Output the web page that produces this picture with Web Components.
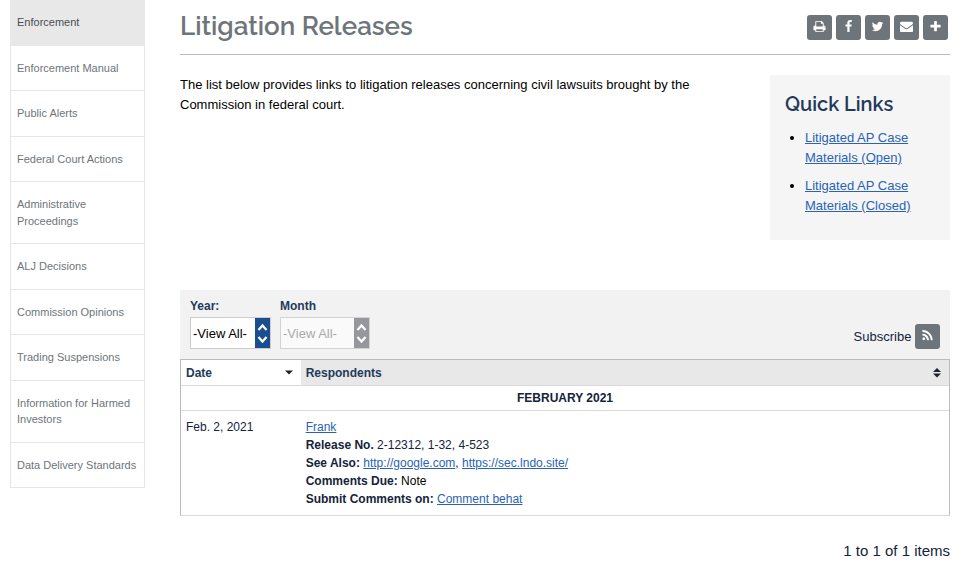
<!DOCTYPE html>
<html lang="en"><head><meta charset="utf-8"><title>Litigation Releases</title>
<style>html,body{margin:0;background:#fff}body{font-family:"Liberation Sans",Arial,sans-serif;color:#000}</style></head>
<body><release-page></release-page>
<script>
const define = (name, html, setup) => customElements.define(name, class extends HTMLElement {
  constructor() {
    super();
    const t = document.createElement('template');
    t.innerHTML = html;
    this.attachShadow({mode: 'open'}).append(t.content.cloneNode(true));
  }
  connectedCallback() { if (setup) setup(this, this.shadowRoot); }
});

const ICONS = {
  print: 'M448 1536h896v-256h-896v256zm0-640h896v-384h-160q-40 0-68-28t-28-68v-160h-640v640zm1152 64q0-26-19-45t-45-19-45 19-19 45 19 45 45 19 45-19 19-45zm128 0v416q0 13-9.5 22.5t-22.5 9.5h-224v160q0 40-28 68t-68 28h-960q-40 0-68-28t-28-68v-160h-224q-13 0-22.5-9.5t-9.500-22.500v-416q0-79 56.500-135.500t135.500-56.500h64v-544q0-40 28-68t68-28h672q40 0 88 20t76 48l152 152q28 28 48 76t20 88v256h64q79 0 135.500 56.500t56.500 135.500z',
  facebook: 'M1343 12v264h-157q-86 0-116 36t-30 108v189h293l-39 296h-254v759h-306v-759h-255v-296h255v-218q0-186 104-288.500t277-102.500q147 0 228 12z',
  twitter: 'M1684 408q-67 98-162 167 1 14 1 42 0 130-38 259.500t-115.500 248.500-184.500 210.500-258 146-323 54.500q-271 0-496-145 35 4 78 4 225 0 401-138-105-2-188-64.500t-114-159.500q33 5 61 5 43 0 85-11-112-23-185.500-111.500t-73.500-205.500v-4q68 38 146 41-66-44-105-115t-39-154q0-88 44-163 121 149 294.500 238.500t371.500 99.500q-8-38-8-74 0-134 94.500-228.500t228.500-94.500q140 0 236 102 109-21 205-78-37 115-142 178 93-10 186-50z',
  envelope: 'M1792 710v794q0 66-47 113t-113 47h-1472q-66 0-113-47t-47-113v-794q44 49 101 87 362 246 497 345 57 42 92.500 65.500t94.500 48 110 24.500h2q51 0 110-24.500t94.500-48 92.500-65.500q170-123 498-345 57-39 100-87zm0-294q0 79-49 151t-122 123q-376 261-468 325-10 7-42.500 31t-54 38.500-52 32.500-57.500 27-50 9h-2q-23 0-50-9t-57.500-27-52-32.500-54-38.500-42.500-31q-91-64-262-182.500t-205-142.500q-62-42-117-115.500t-55-136.500q0-78 41.500-130t118.500-52h1472q65 0 112.500 47t47.500 113z',
  plus: 'M1600 736v192q0 40-28 68t-68 28h-416v416q0 40-28 68t-68 28h-192q-40 0-68-28t-28-68v-416h-416q-40 0-68-28t-28-68v-192q0-40 28-68t68-28h416v-416q0-40 28-68t68-28h192q40 0 68 28t28 68v416h416q40 0 68 28t28 68z',
  rss: 'M576 1344q0 80-56 136t-136 56-136-56-56-136 56-136 136-56 136 56 56 136zm512 123q2 28-17 48-18 21-47 21h-135q-25 0-43-16.500t-20-41.500q-22-229-184.500-391.500t-391.500-184.500q-25-2-41.500-20t-16.500-43v-135q0-29 21-47 17-17 43-17h5q160 13 306 80.500t259 181.500q114 113 181.500 259t80.500 306zm512 2q2 27-18 47-18 20-46 20h-143q-26 0-44.500-17.500t-19.500-42.500q-12-215-101-408.500t-231.500-336-336-231.500-408.500-102q-25-1-42.500-19.500t-17.500-43.500v-143q0-28 20-46 18-18 44-18h3q262 13 501.500 120t425.500 294q187 186 294 425.500t120 501.500z'
};

define('icon-button', `<style>
:host{display:flex;width:25px;height:25px;border-radius:3px;background:#6e757a;justify-content:center;align-items:center;box-sizing:border-box;padding-bottom:2px}
svg{width:13px;height:13px;fill:#fff;display:block}</style>
<svg viewBox="0 0 1792 1792"><path/></svg>`,
(el, root) => root.querySelector('path').setAttribute('d', ICONS[el.getAttribute('icon')]));

define('nav-item', `<style>
:host{display:block;padding:14px 5px 14px 6px;border:1px solid #e6e6e6;border-top:0;font-size:11px;line-height:16.5px;color:#6e757a}
:host([current]){background:#e8e8e8;color:#494d50;border-color:#e8e8e8}</style><slot></slot>`);

define('side-nav', `<style>:host{display:block;width:135px;box-sizing:border-box}</style><slot></slot>`);

define('text-link', `<style>:host{display:inline;color:#2a62b4;text-decoration:underline}</style><slot></slot>`);

define('page-header', `<style>
:host{display:flex;justify-content:space-between;height:54px;border-bottom:1px solid #bbb}
h1{margin:7px 0 0;font:600 26px/38px Raleway,Lato,sans-serif;color:#6e757a;white-space:nowrap}
div{display:flex;gap:4px;padding:15px 2px 0 0}</style>
<h1><slot></slot></h1><div><slot name="tools"></slot></div>`);

define('quick-links', `<style>
:host{display:block;width:180px;height:165px;box-sizing:border-box;background:#f5f5f5;padding:15px}
h2{margin:0;font:600 20px/28px Raleway,Lato,sans-serif;color:#223a5a;white-space:nowrap}
ul{margin:10px 0 0;padding:0 0 0 20px;font-size:13px;line-height:20px}li{margin-bottom:8px}</style>
<h2><slot></slot></h2><ul><li><text-link>Litigated AP Case Materials (Open)</text-link></li><li><text-link>Litigated AP Case Materials (Closed)</text-link></li></ul>`);

define('filter-select', `<style>
:host{display:block;color:#223a5a;font-size:12px;--accent:#1a4e8e}
b{display:block;line-height:18px;height:20px}
.box{display:flex;height:30px;border:1px solid #ccc;background:#fff}
span{flex:1;padding-left:2px;font-size:13px;line-height:31px;color:#000;white-space:nowrap}
svg{display:block;width:15px;height:30px;background:var(--accent)}
:host([disabled]){--accent:#94989c}
:host([disabled]) .box{background:#fafafa;border-color:#d3d3d3}
:host([disabled]) span{color:#aaa}</style>
<b><slot name="label"></slot></b><div class="box"><span><slot></slot></span><svg viewBox="0 0 15 30" fill="none" stroke="#fff" stroke-width="2.2"><path d="M3.500 12L7.500 7.500L11.500 12M3.500 19L7.500 23.500L11.500 19"/></svg></div>`);

define('filter-bar', `<style>
:host{display:flex;height:69px;box-sizing:border-box;background:#f2f2f2;padding:7px 10px 0}
filter-select:first-of-type{width:81px;margin-right:9px}filter-select:nth-of-type(2){width:90px}
.sub{margin:27px 0 0 auto;display:flex;gap:3.600px;font-size:13px;line-height:25px;height:25px;color:#14233c}</style>
<filter-select><span slot="label">Year:</span>-View All-</filter-select>
<filter-select disabled><span slot="label">Month</span>-View All-</filter-select>
<div class="sub"><span>Subscribe</span><icon-button icon="rss"></icon-button></div>`);

define('release-table', `<style>
:host{display:block;border:1px solid #bbb;border-bottom-color:#d9d9d9;font-size:12px;color:#14233c}
.row{display:grid;grid-template-columns:120px 1fr}
.head{height:25px;line-height:26px;font-weight:bold;color:#223a5a;border-bottom:1px solid #d9d9d9}
.head>div{display:flex;justify-content:space-between;align-items:center;height:25px;box-sizing:border-box;padding:0 8px 0 5px}
.head>div+div{background:#e8e8e8;padding-left:4.700px}
svg{display:block;fill:#1e252c}
.month{height:24px;line-height:24px;text-align:center;font-weight:bold;border-bottom:1px solid #d9d9d9}
.body{line-height:18px;padding:7px 0 7px;}
.body>div{padding-left:5px}.body>div+div{padding-left:4.700px}.note{color:#000}</style>
<div class="row head"><div>Date<svg width="8" height="5"><path d="M0 .5h8L4 4.500z"/></svg></div>
<div>Respondents<svg width="8" height="10"><path d="M0 4h8L4 0zM0 5.500h8L4 9.500z"/></svg></div></div>
<div class="month">FEBRUARY 2021</div>
<div class="row body"><div>Feb. 2, 2021</div><div>
<text-link>Frank</text-link><br><b>Release No.</b> 2-12312, 1-32, 4-523<br>
<b>See Also:</b> <text-link>http://google.com</text-link>, <text-link>https://sec.lndo.site/</text-link><br>
<b>Comments Due:</b> <span class="note">Note</span><br><b>Submit Comments on:</b> <text-link>Comment behat</text-link></div></div>`);

define('release-page', `<style>
:host{display:grid;grid-template-columns:135px 770px;column-gap:35px;width:960px;height:586px;box-sizing:border-box;padding-left:10px;overflow:hidden}
.intro{display:flex;justify-content:space-between;padding-top:20px;height:215px}
p{margin:0;width:540px;font-size:13px;line-height:20px}
.count{text-align:right;font-size:15px;line-height:20px;color:#14233c;margin-top:25px}</style>
<side-nav><nav-item current>Enforcement</nav-item><nav-item>Enforcement Manual</nav-item><nav-item>Public Alerts</nav-item><nav-item>Federal Court Actions</nav-item><nav-item>Administrative Proceedings</nav-item><nav-item>ALJ Decisions</nav-item><nav-item>Commission Opinions</nav-item><nav-item>Trading Suspensions</nav-item><nav-item>Information for Harmed Investors</nav-item><nav-item>Data Delivery Standards</nav-item></side-nav>
<main><page-header>Litigation Releases<icon-button slot="tools" icon="print"></icon-button><icon-button slot="tools" icon="facebook"></icon-button><icon-button slot="tools" icon="twitter"></icon-button><icon-button slot="tools" icon="envelope"></icon-button><icon-button slot="tools" icon="plus"></icon-button></page-header>
<div class="intro"><p>The list below provides links to litigation releases concerning civil lawsuits brought by the Commission in federal court.</p><quick-links>Quick Links</quick-links></div>
<filter-bar></filter-bar><release-table></release-table><div class="count">1 to 1 of 1 items</div></main>`);
</script></body></html>
